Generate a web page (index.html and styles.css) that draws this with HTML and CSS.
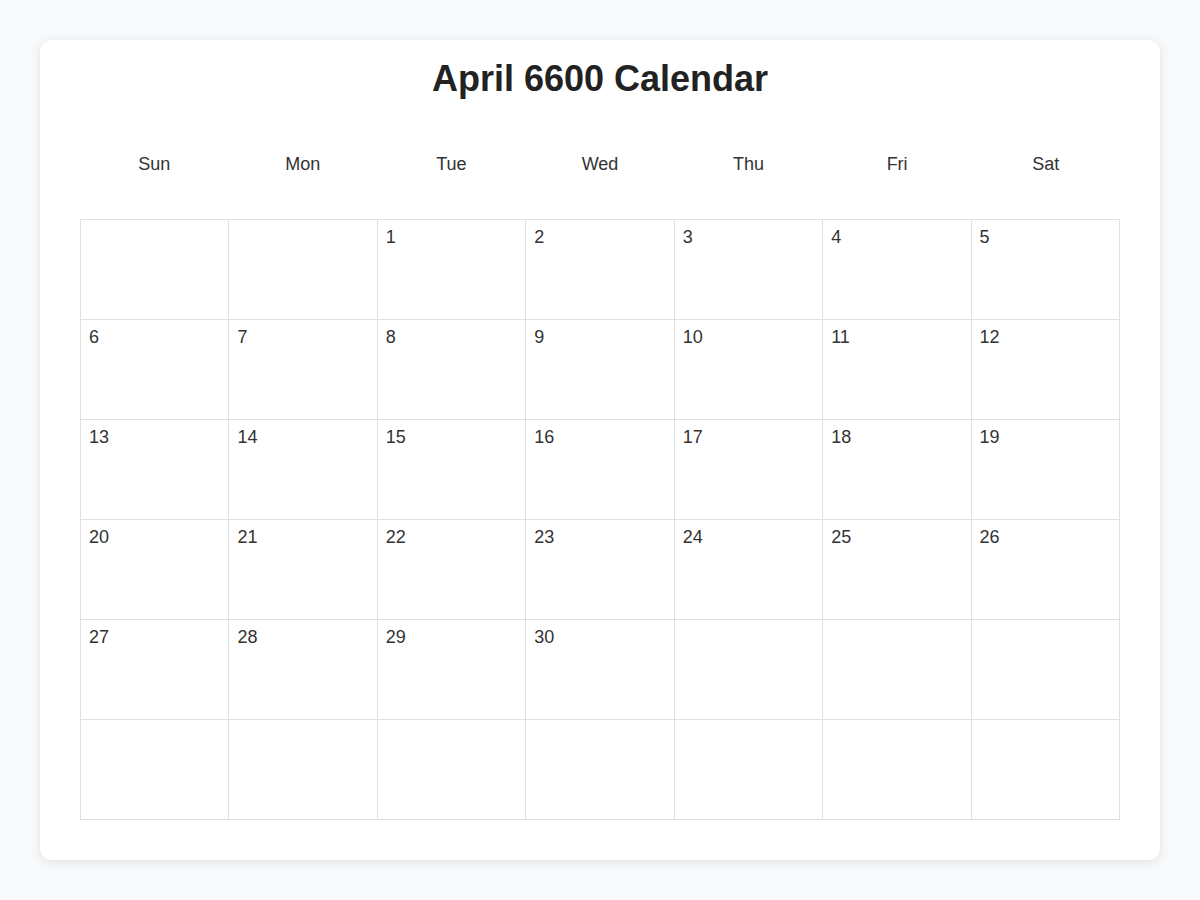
FILE: index.html
```html
<!DOCTYPE html>
<html lang="en">
<head>
<meta charset="utf-8">
<title>April 6600 Calendar</title>
<link rel="stylesheet" href="styles.css">
</head>
<body>
<main class="card">
  <h1 class="title">April 6600 Calendar</h1>
  <div class="weekdays">
    <div class="weekday">Sun</div>
    <div class="weekday">Mon</div>
    <div class="weekday">Tue</div>
    <div class="weekday">Wed</div>
    <div class="weekday">Thu</div>
    <div class="weekday">Fri</div>
    <div class="weekday">Sat</div>
  </div>
  <div class="grid">
    <div class="cell"></div>
    <div class="cell"></div>
    <div class="cell">1</div>
    <div class="cell">2</div>
    <div class="cell">3</div>
    <div class="cell">4</div>
    <div class="cell">5</div>
    <div class="cell">6</div>
    <div class="cell">7</div>
    <div class="cell">8</div>
    <div class="cell">9</div>
    <div class="cell">10</div>
    <div class="cell">11</div>
    <div class="cell">12</div>
    <div class="cell">13</div>
    <div class="cell">14</div>
    <div class="cell">15</div>
    <div class="cell">16</div>
    <div class="cell">17</div>
    <div class="cell">18</div>
    <div class="cell">19</div>
    <div class="cell">20</div>
    <div class="cell">21</div>
    <div class="cell">22</div>
    <div class="cell">23</div>
    <div class="cell">24</div>
    <div class="cell">25</div>
    <div class="cell">26</div>
    <div class="cell">27</div>
    <div class="cell">28</div>
    <div class="cell">29</div>
    <div class="cell">30</div>
    <div class="cell"></div>
    <div class="cell"></div>
    <div class="cell"></div>
    <div class="cell"></div>
    <div class="cell"></div>
    <div class="cell"></div>
    <div class="cell"></div>
    <div class="cell"></div>
    <div class="cell"></div>
    <div class="cell"></div>
  </div>
</main>
</body>
</html>
```

FILE: styles.css
```css
* {
  box-sizing: border-box;
}

html, body {
  margin: 0;
  padding: 0;
}

body {
  background: #f8f9fa;
  padding: 40px;
  font-family: "Liberation Sans", Arial, Helvetica, sans-serif;
  color: #333;
}

.card {
  background: #fff;
  border-radius: 12px;
  box-shadow: 0 2px 10px rgba(0, 0, 0, 0.1);
  padding: 18px 40px 40px;
  width: 1120px;
}

.title {
  margin: 0;
  font-size: 36px;
  font-weight: bold;
  line-height: 1.15;
  text-align: center;
  color: #222;
}

.weekdays {
  display: grid;
  grid-template-columns: repeat(7, 1fr);
  margin: 40px 0 29px;
}

.weekday {
  padding: 15px 0;
  text-align: center;
  font-size: 18px;
  color: #333;
}

.grid {
  display: grid;
  grid-template-columns: repeat(7, 1fr);
  grid-auto-rows: 100px;
  border-top: 1px solid #e0e0e0;
  border-left: 1px solid #e0e0e0;
}

.cell {
  border-right: 1px solid #e0e0e0;
  border-bottom: 1px solid #e0e0e0;
  padding: 7px 8px;
  font-size: 18px;
  color: #333;
}
```
